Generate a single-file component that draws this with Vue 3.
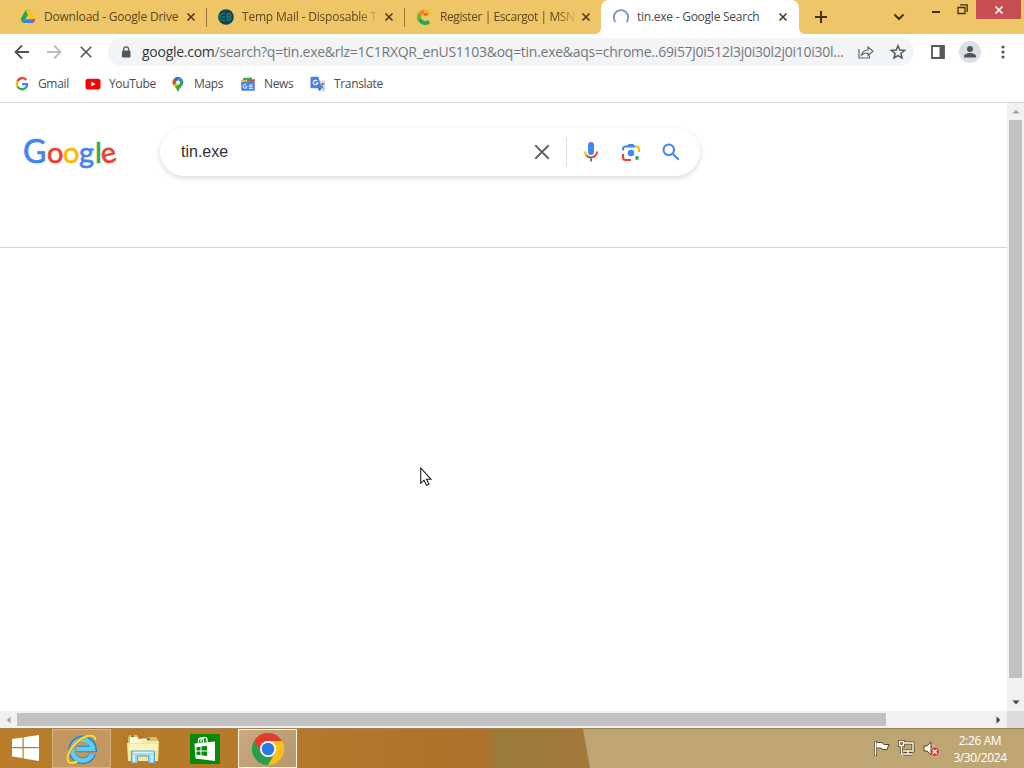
<script setup>
const tabs = [
  { title: 'Download - Google Drive', icon: 'drive' },
  { title: 'Temp Mail - Disposable T', icon: 'temp', clipped: true },
  { title: 'Register | Escargot | MSN', icon: 'escargot', clipped: true },
  { title: 'tin.exe - Google Search', icon: 'spinner', active: true },
];
const bookmarks = [
  { label: 'Gmail', icon: 'google' },
  { label: 'YouTube', icon: 'youtube' },
  { label: 'Maps', icon: 'maps' },
  { label: 'News', icon: 'news' },
  { label: 'Translate', icon: 'translate' },
];
</script>

<template>
  <div class="screen">
    <header class="tabstrip">
      <div v-for="tab in tabs" :key="tab.icon" class="tab" :class="[tab.icon, { active: tab.active }]">
        <svg class="favicon" viewBox="0 0 16 16">
          <template v-if="tab.icon === 'drive'">
            <path d="M5.4 1.500h5.200L5.200 10.600 2.800 14 .5 10.300z" fill="#21a656" />
            <path d="M5.600 1.500h4.800l5.200 9h-5z" fill="#fcc419" />
            <path d="M5.200 10.300h10.300L13.200 14H2.800z" fill="#3f7ee8" />
            <path d="M12 10.300h3.500L13.200 14z" fill="#e04a3a" />
          </template>
          <template v-else-if="tab.icon === 'temp'">
            <circle cx="8" cy="8" r="7.800" fill="#173f4c" />
            <path d="M7 4.500H5.500a3.500 3.500 0 0 0 0 7H7M4 8h3M9.500 4.500v7M9 4.500h2a2 2 0 0 1 1 3.500 2 2 0 0 1-1 3.500H9M9.500 8H12" fill="none" stroke="#14807f" stroke-width="1.400" />
          </template>
          <template v-else-if="tab.icon === 'escargot'">
            <path d="M13 12.500A6 6 0 0 1 3.200 9" fill="none" stroke="#20ad52" stroke-width="4" />
            <path d="M3.300 10.500A6 6 0 0 1 5 4" fill="none" stroke="#6cb83c" stroke-width="4" />
            <path d="M4 5a6 6 0 0 1 5-2.500" fill="none" stroke="#f5862a" stroke-width="4" />
            <path d="M8 2.700a5 5 0 0 1 5 3.500" fill="none" stroke="#fbb21c" stroke-width="3.500" />
            <path d="M7.500 5.500h4" stroke="#ee4638" stroke-width="2" />
          </template>
          <path v-else d="M2.500 13A7.200 7.200 0 1 1 13.500 13" fill="none" stroke="#7593d3" stroke-width="1.800" />
        </svg>
        <span class="title" :class="{ clipped: tab.clipped }">{{ tab.title }}</span>
        <svg class="close" viewBox="0 0 10 10"><path d="M1.500 1.500l7 7m0-7l-7 7" /></svg>
      </div>
      <svg class="plus" viewBox="0 0 14 14"><path d="M7 1v12M1 7h12" /></svg>
      <svg class="chevron" viewBox="0 0 12 8"><path d="M1.500 1.500L6 6l4.500-4.500" /></svg>
      <div class="window-buttons">
        <svg class="min" viewBox="0 0 8 2"><path d="M0 1h8" /></svg>
        <svg class="restore" viewBox="0 0 11 11"><path d="M1 3.500h7v6H1zM3 .8h7.200V8" /></svg>
        <div class="win-close"><svg viewBox="0 0 10 10"><path d="M1.500 1.500l7 7m0-7l-7 7" /></svg></div>
      </div>
    </header>

    <div class="toolbar">
      <svg class="nav back" viewBox="0 0 16 16"><path d="M15 8H2M8 1.500L1.500 8 8 14.500" /></svg>
      <svg class="nav forward" viewBox="0 0 16 16"><path d="M1 8h13M8 1.500L14.500 8 8 14.500" /></svg>
      <svg class="nav stop" viewBox="0 0 16 16"><path d="M2 2l12 12m0-12L2 14" /></svg>
      <div class="omnibox">
        <svg class="lock" viewBox="0 0 10 12">
          <rect x="1" y="4.500" width="8.500" height="7" rx="1" fill="#54575b" />
          <path d="M2.800 5V3.200a2.400 2.400 0 0 1 4.800 0V5" fill="none" stroke="#54575b" stroke-width="1.300" />
        </svg>
        <span class="url"><b>google.com</b>/search?q=tin.exe&amp;rlz=1C1RXQR_enUS1103&amp;oq=tin.exe&amp;aqs=chrome..69i57j0i512l3j0i30l2j0i10i30l...</span>
        <svg class="share" viewBox="0 0 16 14">
          <path d="M1 4v9h10.500v-2.500M3.500 10C4.500 6.500 7 5 10 5V2l5 4.300-5 4.200V8C7 8 5 8.700 3.500 10z" />
        </svg>
        <svg class="star" viewBox="0 0 16 16"><path d="M8 1.800l1.800 4.300 4.700.4-3.600 3 1.100 4.500L8 11.600 4 14l1.100-4.500-3.600-3 4.700-.4z" /></svg>
      </div>
      <svg class="panel" viewBox="0 0 14 14"><path d="M1 1h12v12H1z" fill="none" stroke="#55585c" stroke-width="1.800" /><path d="M8.500 1H13v12H8.500z" fill="#55585c" /></svg>
      <svg class="avatar" viewBox="0 0 22 22">
        <circle cx="11" cy="11" r="11" fill="#dce0e6" />
        <circle cx="11" cy="8" r="3" fill="#4c5561" />
        <path d="M5 16.500v-1.200c0-2 3.500-3.300 6-3.300s6 1.300 6 3.300v1.200z" fill="#4c5561" />
      </svg>
      <svg class="menu" viewBox="0 0 4 14"><circle cx="2" cy="2" r="1.600" /><circle cx="2" cy="7" r="1.600" /><circle cx="2" cy="12" r="1.600" /></svg>
    </div>

    <nav class="bookmarks">
      <div v-for="b in bookmarks" :key="b.icon" class="bookmark" :class="b.icon">
        <svg viewBox="0 0 16 16">
          <g v-if="b.icon === 'google'" fill="none" stroke-width="2.300">
            <path d="M12.300 4A5.200 5.200 0 0 0 3.500 5.500" stroke="#ea4335" />
            <path d="M3.500 5.400a5.200 5.200 0 0 0 0 5.200" stroke="#fbbc04" />
            <path d="M3.500 10.500a5.200 5.200 0 0 0 8.200 1.300" stroke="#34a853" />
            <path d="M11.600 12A5.200 5.200 0 0 0 13 8.200H8" stroke="#4285f4" />
          </g>
          <g v-else-if="b.icon === 'youtube'">
            <rect x=".5" y="2.800" width="15" height="10.600" rx="2.500" fill="#f00" />
            <path d="M6.300 5.600v5l4.300-2.500z" fill="#fff" />
          </g>
          <g v-else-if="b.icon === 'maps'">
            <path d="M2.600 6.500a5.400 5.400 0 0 1 10.800 0C13.400 10 9.200 11.500 8.500 15.500h-1C6.800 11.500 2.600 10 2.600 6.500z" fill="#34a853" />
            <path d="M3.800 3.100A5.400 5.400 0 0 1 9.500 1.300L5.900 5.200z" fill="#1a73e8" />
            <path d="M3.800 3.100l2.300 2-3.200 3.700C2.300 7 2.500 4.600 3.800 3.100z" fill="#ea4335" />
            <path d="M9.500 1.300a5.400 5.400 0 0 1 3.300 2.700L9 6.500 6.500 5z" fill="#4285f4" />
            <path d="M6.400 8l-3.500.8 1.800 2.800L9.600 7.800z" fill="#fbbc04" />
            <circle cx="8" cy="6.400" r="2" fill="#fff" />
          </g>
          <g v-else-if="b.icon === 'news'">
            <path d="M3 2l9-.5.5 6H3z" fill="#38a853" />
            <path d="M10 4l5-1-1 6h-3z" fill="#ea4335" />
            <path d="M1 4h6l1 5H2z" fill="#f7b928" />
            <rect x="1.200" y="5.800" width="13.600" height="9" rx="1" fill="#4d83e8" />
            <path d="M6.500 9A2 2 0 1 0 7 10.700H5M9 9h3.800M9 10.700h3.500M9 12.400h3.800" fill="none" stroke="#e8effd" stroke-width="1" />
          </g>
          <g v-else>
            <path d="M6.500 4.500h8.500v11H9z" fill="#d7dadd" />
            <path d="M1.500.8h6.800l3.300 11.500H1.500a1 1 0 0 1-1-1V1.800a1 1 0 0 1 1-1z" fill="#4580e6" />
            <path d="M7.300 5a2.300 2.300 0 1 0 .5 2H5.700" fill="none" stroke="#fff" stroke-width="1.100" />
            <path d="M10.500 8h4M12.500 7v1c0 2-1 3.500-2 4.500M11.300 9.500c.5 1.500 1.500 2.500 2.700 3" fill="none" stroke="#66727e" />
            <path d="M8 12.300h3.600L9.200 15z" fill="#2459b8" />
          </g>
        </svg>
        <span>{{ b.label }}</span>
      </div>
    </nav>

    <div class="browser-view">
      <main class="page">
        <div class="search-header">
          <div class="logo"><i class="big">G</i><i class="red">o</i><i class="yellow">o</i><i>g</i><i class="green">l</i><i class="red tilt">e</i></div>
          <div class="searchbox">
            <span class="query">tin.exe</span>
            <svg class="clear" viewBox="0 0 16 16"><path d="M2 2l12 12m0-12L2 14" /></svg>
            <svg class="mic" viewBox="0 0 20 22">
              <rect x="7" y="1" width="6" height="13" rx="3" fill="#4285f4" />
              <g fill="none" stroke-width="2">
                <path d="M4 10.500c0 1.800.6 3 1.700 4.200" stroke="#fbbc04" />
                <path d="M5.500 14.500C8 17 12 17 14.500 14.500" stroke="#ea4335" />
                <path d="M14.300 14.700A6 6 0 0 0 16 10.500" stroke="#ea4335" />
                <path d="M10 16.500v4" stroke="#34a853" />
              </g>
            </svg>
            <svg class="lens" viewBox="0 0 20 20">
              <circle cx="10" cy="11" r="3.200" fill="#4285f4" />
              <path d="M6 4.600L7.500 2h5L14 4.600z" fill="#4285f4" />
              <g fill="none" stroke-width="2.100">
                <path d="M2 8.500V7a2.500 2.500 0 0 1 2.500-2.500H14" stroke="#4285f4" />
                <path d="M14 4.500h1A3 3 0 0 1 18 7.500V10" stroke="#fbbc04" />
                <path d="M2 12v3.500A2.500 2.500 0 0 0 4.500 18H10" stroke="#ea4335" />
              </g>
              <circle cx="16" cy="16" r="1.900" fill="#34a853" />
            </svg>
            <svg class="find" viewBox="0 0 20 20"><circle cx="7.800" cy="7.800" r="5.300" /><path d="M11.700 11.700l6 6" /></svg>
          </div>
        </div>
        <svg class="cursor" viewBox="0 0 12 20"><path d="M.7 1v15.300L4 13.200l2.600 5.200 2.400-1.100-2.500-5H11z" /></svg>
      </main>
      <div class="vscroll">
        <svg viewBox="0 0 8 5"><path d="M.5 4.500L4 .8l3.500 3.700z" fill="#a3a3a3" /></svg>
        <div class="thumb"></div>
        <svg viewBox="0 0 8 5"><path d="M.5.5h7L4 4.300z" fill="#404040" /></svg>
      </div>
      <div class="hscroll">
        <svg viewBox="0 0 5 8"><path d="M4.500.5v7L.8 4z" fill="#a3a3a3" /></svg>
        <div class="thumb"></div>
        <svg viewBox="0 0 5 8"><path d="M.5.5v7L4.300 4z" fill="#404040" /></svg>
      </div>
      <div class="corner"></div>
    </div>

    <footer class="taskbar">
      <svg class="start" viewBox="0 0 27 26">
        <path d="M0 4l10.500-1.600V12H0zM11.700 2.200L27 0v12H11.700zM0 13.200h10.500v9.900L0 21.500zM11.700 13.200H27V26l-15.300-2.500z" fill="#fff" />
      </svg>
      <div class="task ie">
        <svg viewBox="0 0 34 32">
          <path d="M27.800 21A11 11 0 1 1 28.600 16H12" fill="none" stroke="#2389c3" stroke-width="6.600" />
          <path d="M27.300 21A10.400 10.400 0 1 1 28 16H12" fill="none" stroke="#62cbf1" stroke-width="4.600" />
          <path d="M30.500 7C30 0 20 2 11.500 9.500 3.500 17 0 27 4.500 29.500c2 1.200 5 .3 7.500-1" fill="none" stroke="#c89618" stroke-width="3.200" />
          <path d="M30.500 7C30 0 20 2 11.500 9.500 3.500 17 0 27 4.500 29.500c2 1.200 5 .3 7.500-1" fill="none" stroke="#f8d75a" stroke-width="2" />
        </svg>
      </div>
      <svg class="explorer" viewBox="0 0 32 30">
        <path d="M1 4l1.500-3H10l2 3h8l2-1h7l2 3v21H1z" fill="#d9c36a" />
        <path d="M3 3h7l1 2h8l1 2h9v3H3z" fill="#fff8df" />
        <path d="M4 2.200h3" stroke="#29a94b" stroke-width="2" />
        <path d="M12 3.700h3" stroke="#e25436" stroke-width="2" />
        <path d="M20 5h3" stroke="#378bd5" stroke-width="2" />
        <path d="M0 9h13l2-2h17l-1 20H1z" fill="#f2e79b" />
        <path d="M1 10h30L30 17H2z" fill="#fbf3b7" />
        <path d="M4.500 29V17h23v12h-6v-7h-11v7z" fill="#9ed6f3" stroke="#58a5d4" />
        <path d="M6 18.500h20M7 21v7M25 21v7" stroke="#e0f5ff" stroke-width="1.500" />
      </svg>
      <svg class="store" viewBox="0 0 30 30">
        <path d="M0 0h30v30H0z" fill="#078a09" />
        <path d="M4.500 9.500L25 7.500V27L5.500 24.500z" fill="#fff" />
        <path d="M8.500 9V6.500c0-3.500 5-3.500 5 0V9M11 8.500V6c0-3.500 6-3.500 6 0v2.500" fill="none" stroke="#fff" stroke-width="1.300" />
        <path d="M6.500 13.200l4-.5v3.800h-4zM11.500 12.500l5.500-.7v4.700h-5.500zM6.500 17.500h4v3.700l-4-.5zM11.500 17.500H17V22l-5.500-.7z" fill="#078a09" />
      </svg>
      <div class="task chrome">
        <svg viewBox="0 0 32 32">
          <path d="M16 8h13.860A16 16 0 0 1 16 32l7-12z" fill="#fbc116" />
          <path d="M2.140 8A16 16 0 0 1 29.860 8H16L9 20z" fill="#e33b2e" />
          <path d="M2.140 8L9.100 20 16 24h4.700L16 32A16 16 0 0 1 2.140 8z" fill="#279f4b" />
          <circle cx="16" cy="16" r="8" fill="#fff" />
          <circle cx="16" cy="16" r="6.300" fill="#2878e5" />
        </svg>
      </div>
      <svg class="tray flag" viewBox="0 0 17 17">
        <path d="M2.500 1v15" stroke="#59441e" stroke-width="3" />
        <path d="M3 2.500h5c2 0 2 2 4 2h4l-2 5h-3c-2 0-2-1.500-4-1.500H3z" fill="#fff" stroke="#59441e" />
        <path d="M2.500 1.500v14" stroke="#fff" stroke-width="1.500" />
      </svg>
      <svg class="tray" viewBox="0 0 17 17">
        <g fill="none" stroke="#59441e" stroke-width="3"><path d="M6 3h9v8H5M10 11v3M6 14h8M1.500 1.500h4v4h-4zM3.500 5v9" /></g>
        <g fill="none" stroke="#fff" stroke-width="1.400"><path d="M6 3h9v8H5M10 11v3M6 14h8M1.500 1.500h4v4h-4zM3.500 5v9H5" /></g>
      </svg>
      <svg class="tray" viewBox="0 0 17 17">
        <path d="M1 6h3l4-4v13l-4-4H1z" fill="#fff" stroke="#59441e" />
        <path d="M10 4.500c1 1 1.500 2 1.500 3" fill="none" stroke="#f3e8d0" />
        <circle cx="11.800" cy="11.700" r="4.600" fill="#d8393a" stroke="#f3b0a5" stroke-width=".7" />
        <path d="M9.800 9.700l4 4m0-4l-4 4" stroke="#fff" stroke-width="1.500" />
      </svg>
      <div class="clock"><span>2:26 AM</span><span class="date">3/30/2024</span></div>
    </footer>
  </div>
</template>

<style>
body {
  margin: 0;
  overflow: hidden;
}
</style>

<style scoped>
.screen {
  width: 1024px;
  height: 768px;
  display: flex;
  flex-direction: column;
  background: #fff;
  font-family: "Open Sans", "Noto Sans", sans-serif;
  font-size: 12px;
  color: #4a4d51;
}
svg {
  display: block;
  flex: none;
}
.tabstrip {
  height: 34px;
  background: #efc667;
  display: flex;
  align-items: center;
  padding-left: 8px;
  box-sizing: border-box;
}
.tab {
  width: 198px;
  height: 34px;
  box-sizing: border-box;
  display: flex;
  align-items: center;
  padding-left: 12px;
  color: #5c471e;
  flex: none;
}
.tab.drive, .tab.temp {
  background: linear-gradient(#907639, #907639) right 0 top 8px / 1px 19px no-repeat;
}
.tab.drive {
  width: 199px;
}
.tab.escargot {
  width: 196px;
  padding-left: 11px;
}
.tab.temp {
  padding-left: 11px;
}
.tab.active {
  background: #fff;
  color: #45484c;
  border-radius: 8px 8px 0 0;
  position: relative;
}
.tab.active::before,
.tab.active::after {
  content: "";
  position: absolute;
  bottom: 0;
  width: 6px;
  height: 6px;
}
.tab.active::before {
  left: -6px;
  background: radial-gradient(circle at 0 0, transparent 6px, #fff 6px);
}
.tab.active::after {
  right: -6px;
  background: radial-gradient(circle at 100% 0, transparent 6px, #fff 6px);
}
.favicon {
  width: 16px;
  height: 16px;
  margin-right: 8px;
}
.title {
  width: 136px;
  white-space: nowrap;
  letter-spacing: -0.2px;
  padding-bottom: 1px;
}
.active .title {
  letter-spacing: -0.25px;
}
.title.clipped {
  mask-image: linear-gradient(90deg, #000 116px, transparent 138px);
}
.escargot .title {
  width: 135px;
  letter-spacing: -0.42px;
}
.close {
  width: 10px;
  height: 10px;
  margin-left: 6px;
}
.active .close {
  margin-left: 5px;
}
.close path {
  stroke: #4d3915;
  stroke-width: 1.6;
}
.plus, .chevron, .min, .restore {
  fill: none;
  stroke: #40300f;
  stroke-width: 2;
}
.plus {
  width: 14px;
  height: 14px;
  margin-left: 15px;
}
.chevron {
  width: 12px;
  height: 8px;
  margin-left: 65px;
}
.window-buttons {
  display: flex;
  align-self: flex-start;
  margin-left: 27px;
  height: 19px;
}
.min {
  width: 8px;
  height: 2px;
  margin-top: 11px;
}
.restore {
  width: 11px;
  height: 11px;
  margin: 4px 0 0 17px;
  stroke-width: 1.3;
}
.win-close {
  width: 45px;
  height: 19px;
  margin-left: 8px;
  background: #c84f50;
  display: flex;
  align-items: center;
  justify-content: center;
  padding-right: 0;
}
.win-close svg {
  width: 10px;
  height: 10px;
  stroke: #fff;
  stroke-width: 1.6;
}
.toolbar {
  height: 36px;
  display: flex;
  align-items: center;
  padding-left: 14px;
}
.nav {
  width: 16px;
  height: 16px;
  fill: none;
  stroke: #505357;
  stroke-width: 1.8;
  margin-right: 16px;
}
.forward {
  stroke: #b9bbbe;
}
.stop {
  width: 14px;
  height: 14px;
  margin: 0 15px 0 1px;
}
.omnibox {
  width: 806px;
  height: 28px;
  border-radius: 14px;
  background: #f2f4f6;
  display: flex;
  align-items: center;
  padding-left: 13px;
  box-sizing: border-box;
}
.lock {
  width: 10px;
  height: 12px;
}
.url {
  width: 702px;
  margin-left: 11px;
  font-size: 14px;
  letter-spacing: -0.27px;
  white-space: nowrap;
  color: #74777c;
  padding-bottom: 1px;
}
.url b {
  font-weight: 400;
  color: #35373a;
}
.share {
  width: 16px;
  height: 14px;
  margin-left: 14px;
  fill: none;
  stroke: #63666a;
  stroke-width: 1.2;
}
.star {
  width: 16px;
  height: 16px;
  margin-left: 16px;
  fill: none;
  stroke: #55585c;
  stroke-width: 1.5;
}
.panel {
  width: 14px;
  height: 14px;
  margin-left: 17px;
}
.avatar {
  width: 22px;
  height: 22px;
  margin-left: 14px;
}
.menu {
  width: 4px;
  height: 14px;
  margin-left: 20px;
  fill: #505357;
}
.bookmarks {
  display: flex;
  align-items: center;
  padding: 0 0 5px 14px;
  box-sizing: border-box;
  border-bottom: 1px solid #d4d6d9;
  height: 33px;
}
.bookmark {
  display: flex;
  align-items: center;
  gap: 8px;
  letter-spacing: -0.35px;
}
.bookmark svg {
  width: 16px;
  height: 16px;
}
.bookmark.google { width: 71px; }
.bookmark.youtube { width: 85px; }
.bookmark.maps { width: 70px; }
.bookmark.news { width: 70px; }
.browser-view {
  height: 625px;
  display: grid;
  grid-template-columns: 1007px 17px;
  grid-template-rows: 608px 17px;
}
.page {
  position: relative;
}
.search-header {
  height: 145px;
  box-sizing: border-box;
  border-bottom: 1px solid #d0d4d6;
  display: flex;
  align-items: flex-start;
  padding: 25px 0 0 23px;
}
.logo {
  width: 92px;
  height: 46px;
  margin-right: 45px;
  display: flex;
  align-items: baseline;
  font: 400 29px/46px Lato, sans-serif;
  color: #4285f4;
}
.logo i {
  width: 16px;
  flex: none;
  font-style: normal;
  -webkit-text-stroke: 0.7px;
}
.logo .big {
  width: 24px;
  font-size: 32px;
}
.logo .red { color: #ea4335; }
.logo .yellow { color: #fbbc05; }
.logo .green {
  width: 5px;
  color: #34a853;
}
.logo .tilt {
  transform: rotate(-14deg);
}
.searchbox {
  width: 540px;
  height: 48px;
  box-sizing: border-box;
  border-radius: 24px;
  background: #fff;
  box-shadow: 0 2px 4px 1px rgba(64, 60, 67, 0.14);
  display: flex;
  align-items: center;
  padding-left: 21px;
}
.query {
  width: 345px;
  font: 16px "Liberation Sans", Arial, sans-serif;
  color: #303134;
}
.clear {
  width: 18px;
  height: 28px;
  padding-right: 15px;
  margin-left: 7px;
  border-right: 1px solid #dadce0;
  fill: none;
  stroke: #5f6368;
  stroke-width: 1.7;
}
.mic {
  width: 20px;
  height: 22px;
  margin-left: 14px;
}
.lens {
  width: 20px;
  height: 20px;
  margin-left: 20px;
}
.find {
  width: 20px;
  height: 20px;
  margin-left: 20px;
  fill: none;
  stroke: #4285f4;
  stroke-width: 2;
}
.cursor {
  position: absolute;
  left: 420px;
  top: 364px;
  width: 12px;
  height: 20px;
  fill: #fff;
  stroke: #222;
  stroke-width: 1.1;
}
.vscroll, .hscroll {
  background: #f1f1f1;
  display: flex;
  align-items: center;
}
.vscroll {
  flex-direction: column;
}
.vscroll svg {
  width: 8px;
  height: 5px;
  margin: 6px 0;
}
.vscroll .thumb {
  width: 13px;
  height: 558px;
  margin-bottom: 16px;
  background: #c1c1c1;
}
.hscroll svg {
  width: 5px;
  height: 8px;
  margin: 0 6px;
}
.hscroll .thumb {
  width: 869px;
  height: 13px;
  margin-right: 104px;
  background: #c1c1c1;
}
.corner {
  background: #dcdcdc;
}
.taskbar {
  height: 40px;
  box-sizing: border-box;
  border-top: 1px solid #a18050;
  display: flex;
  align-items: center;
  padding-left: 12px;
  background: linear-gradient(80deg, transparent 580.5px, #bda673 581.5px), linear-gradient(90deg, #b77d28 0, #b4792b 300px, #af702c 485px, #9c7b38 496px, #a2793b 600px);
}
.start {
  width: 27px;
  height: 26px;
  margin-top: -2px;
}
.task {
  width: 59px;
  height: 39px;
  box-sizing: border-box;
  display: flex;
  align-items: center;
  justify-content: center;
  border: 1px solid #d5b385;
  background: #c39860;
}
.ie {
  margin-left: 13px;
}
.ie svg {
  width: 34px;
  height: 32px;
}
.explorer {
  width: 32px;
  height: 30px;
  margin-left: 16px;
}
.store {
  width: 30px;
  height: 30px;
  margin-left: 31px;
}
.chrome {
  margin-left: 18px;
  border-color: #fff4df;
  background: linear-gradient(135deg, #c9aa84, #b7966c);
}
.chrome svg {
  width: 32px;
  height: 32px;
}
.tray {
  width: 17px;
  height: 17px;
  margin-left: 8px;
}
.flag {
  margin-left: 576px;
}
.clock {
  width: 60px;
  margin-left: 10px;
  display: flex;
  flex-direction: column;
  align-items: center;
  line-height: 17px;
  letter-spacing: -0.4px;
  white-space: nowrap;
  color: #fff;
}
</style>
